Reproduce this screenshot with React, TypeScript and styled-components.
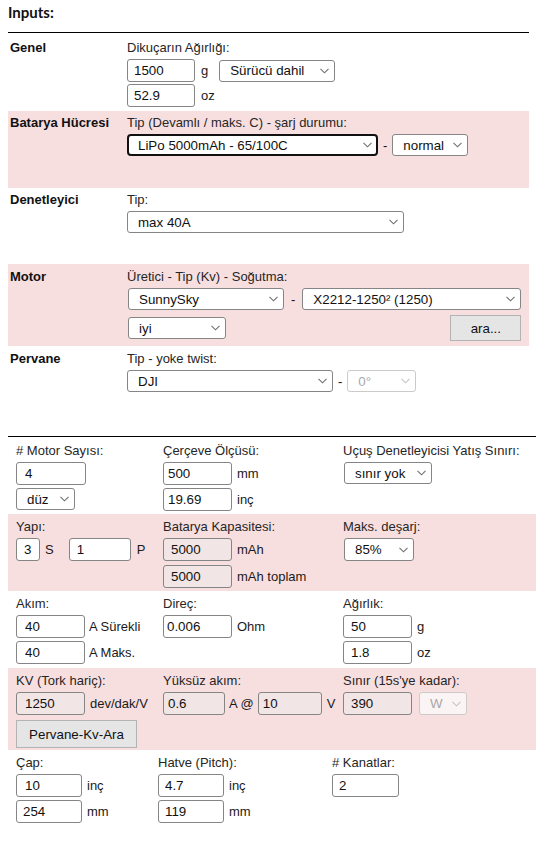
import React from "react";
import styled, { createGlobalStyle } from "styled-components";

const GlobalStyle = createGlobalStyle`
  html, body { margin: 0; padding: 0; background: #fff; }
  body {
    font-family: "Liberation Sans", Arial, sans-serif;
    font-size: 13px;
    color: #1a1a1a;
  }
  * { box-sizing: border-box; }
`;

const Page = styled.div`
  width: 542px;
  padding-left: 8px;
`;

const Header = styled.div`
  width: 521px;
  height: 33px;
  border-bottom: 1px solid #000;
  padding-top: 2px;
  font-family: Lato, "Open Sans", sans-serif;
  font-weight: 700;
  font-size: 15px;
  line-height: 20px;
  color: #111;
`;

const TopTable = styled.div`
  width: 521px;
`;

const TRow = styled.div<{ $pink?: boolean; $pt: number; $pb?: number; $minH?: number }>`
  display: grid;
  grid-template-columns: 119px 1fr;
  background: ${(p) => (p.$pink ? "#f8dfdf" : "transparent")};
  padding: ${(p) => p.$pt}px 0 ${(p) => p.$pb ?? 0}px;
  min-height: ${(p) => p.$minH ?? 0}px;
`;

const RowLabel = styled.div`
  font-weight: 700;
  padding-left: 2px;
  line-height: 15px;
  color: #111;
`;

const Cell = styled.div`
  display: flex;
  flex-direction: column;
  align-items: flex-start;
`;

const FieldTitle = styled.div`
  line-height: 15px;
  margin-bottom: 4px;
  color: #262626;
  white-space: nowrap;
`;

const FieldLine = styled.div<{ $mt?: number; $between?: boolean }>`
  display: flex;
  align-items: center;
  margin-top: ${(p) => p.$mt ?? 0}px;
  justify-content: ${(p) => (p.$between ? "space-between" : "flex-start")};
  align-self: ${(p) => (p.$between ? "stretch" : "auto")};
`;

const InlineBlock = styled.div<{ $ml?: number }>`
  display: inline-flex;
  flex-direction: column;
  margin-left: ${(p) => p.$ml ?? 0}px;
`;

const TextInput = styled.input<{ $w: number; $ro?: boolean; $pl?: number }>`
  flex: none;
  width: ${(p) => p.$w}px;
  height: 23px;
  border: 1px solid #858585;
  border-radius: 3px;
  padding: 0 3px 0 ${(p) => p.$pl ?? 6}px;
  font-family: "Liberation Sans", Arial, sans-serif;
  font-size: 13.33px;
  color: #111;
  background: ${(p) => (p.$ro ? "#f1e5e5" : "#fff")};
  outline: none;
`;

const Unit = styled.span<{ $ml?: number; $mr?: number }>`
  margin-left: ${(p) => p.$ml ?? 5}px;
  margin-right: ${(p) => p.$mr ?? 0}px;
  line-height: 15px;
  color: #1a1a1a;
  white-space: nowrap;
`;

const Dash = styled.span<{ $m?: number }>`
  margin: 0 ${(p) => p.$m ?? 5}px;
  color: #111;
`;

const SelectWrap = styled.span<{ $w: number; $h?: number; $ml?: number }>`
  position: relative;
  display: inline-flex;
  flex: none;
  width: ${(p) => p.$w}px;
  height: ${(p) => p.$h ?? 22}px;
  margin-left: ${(p) => p.$ml ?? 0}px;
`;

const NativeSelect = styled.select<{ $focus?: boolean; $dis?: boolean; $tint?: boolean }>`
  appearance: none;
  -webkit-appearance: none;
  width: 100%;
  height: 100%;
  border: ${(p) =>
    p.$focus ? "2px solid #111" : `1px solid ${p.$dis ? "#cfcaca" : "#858585"}`};
  border-radius: ${(p) => (p.$focus ? 4 : 3)}px;
  padding: 0 20px 0 ${(p) => (p.$focus ? 9 : 10)}px;
  background: ${(p) => (p.$tint ? "#fbf4f4" : "#fff")};
  color: ${(p) => (p.$dis ? "#a8a8a8" : "#111")};
  font-family: "Liberation Sans", Arial, sans-serif;
  font-size: 13.33px;
  outline: none;
  opacity: 1;
`;

const Chevron = styled.svg<{ $dis?: boolean }>`
  position: absolute;
  right: 6px;
  top: 50%;
  margin-top: -3px;
  width: 9px;
  height: 6px;
  pointer-events: none;
  fill: none;
  stroke: ${(p) => (p.$dis ? "#c4c4c4" : "#6f6f6f")};
  stroke-width: 1.1;
`;

const GreyButton = styled.button<{ $w: number; $h: number }>`
  flex: none;
  width: ${(p) => p.$w}px;
  height: ${(p) => p.$h}px;
  background: #e5e5e5;
  border: 1px solid #b3b3b3;
  border-radius: 0;
  font-family: "Liberation Sans", Arial, sans-serif;
  font-size: 13.33px;
  color: #111;
  padding: 0;
`;

const BottomTable = styled.div`
  width: 528px;
  border-top: 1px solid #000;
`;

const BRow = styled.div<{ $pink?: boolean; $cols: string; $pt: number; $pb: number }>`
  display: grid;
  grid-template-columns: ${(p) => p.$cols};
  padding: ${(p) => p.$pt}px 0 ${(p) => p.$pb}px 8px;
  background: ${(p) => (p.$pink ? "#f8dfdf" : "transparent")};
`;

type SelProps = {
  w: number;
  h?: number;
  ml?: number;
  value: string;
  focus?: boolean;
  disabled?: boolean;
  tint?: boolean;
};

function Select({ w, h, ml, value, focus, disabled, tint }: SelProps) {
  return (
    <SelectWrap $w={w} $h={h} $ml={ml}>
      <NativeSelect $focus={focus} $dis={disabled} $tint={tint} disabled={disabled}>
        <option>{value}</option>
      </NativeSelect>
      <Chevron $dis={disabled} viewBox="0 0 9 6">
        <path d="M0.5 0.8 L4.5 4.8 L8.5 0.8" />
      </Chevron>
    </SelectWrap>
  );
}

const COLS = "147px 180px 1fr";
const COLS_LAST = "142px 174px 1fr";

export default function App() {
  return (
    <Page>
      <GlobalStyle />
      <Header>Inputs:</Header>

      <TopTable>
        <TRow $pt={7} $pb={4}>
          <RowLabel>Genel</RowLabel>
          <Cell>
            <FieldTitle>Dikuçarın Ağırlığı:</FieldTitle>
            <FieldLine>
              <TextInput $w={68} defaultValue="1500" />
              <Unit $ml={6} $mr={11}>g</Unit>
              <Select w={116} value="Sürücü dahil" />
            </FieldLine>
            <FieldLine $mt={2}>
              <TextInput $w={68} defaultValue="52.9" />
              <Unit $ml={6}>oz</Unit>
            </FieldLine>
          </Cell>
        </TRow>

        <TRow $pink $pt={4} $minH={77}>
          <RowLabel>Batarya Hücresi</RowLabel>
          <Cell>
            <FieldTitle>Tip (Devamlı / maks. C) - şarj durumu:</FieldTitle>
            <FieldLine>
              <Select w={251} value="LiPo 5000mAh - 65/100C" focus />
              <Dash>-</Dash>
              <Select w={76} value="normal" />
            </FieldLine>
          </Cell>
        </TRow>

        <TRow $pt={4} $minH={76}>
          <RowLabel>Denetleyici</RowLabel>
          <Cell>
            <FieldTitle>Tip:</FieldTitle>
            <FieldLine>
              <Select w={277} value="max 40A" />
            </FieldLine>
          </Cell>
        </TRow>

        <TRow $pink $pt={5} $pb={5}>
          <RowLabel>Motor</RowLabel>
          <Cell>
            <FieldTitle>Üretici - Tip (Kv) - Soğutma:</FieldTitle>
            <InlineBlock $ml={1}>
              <FieldLine>
                <Select w={156} value="SunnySky" />
                <Dash $m={7}>-</Dash>
                <Select w={219} value="X2212-1250² (1250)" />
              </FieldLine>
              <FieldLine $mt={5} $between>
                <Select w={98} value="iyi" />
                <GreyButton $w={71} $h={26}>ara...</GreyButton>
              </FieldLine>
            </InlineBlock>
          </Cell>
        </TRow>

        <TRow $pt={5} $minH={90}>
          <RowLabel>Pervane</RowLabel>
          <Cell>
            <FieldTitle>Tip - yoke twist:</FieldTitle>
            <FieldLine>
              <Select w={206} value="DJI" />
              <Dash>-</Dash>
              <Select w={69} value="0°" disabled />
            </FieldLine>
          </Cell>
        </TRow>
      </TopTable>

      <BottomTable>
        <BRow $cols={COLS} $pt={6} $pb={3}>
          <Cell>
            <FieldTitle># Motor Sayısı:</FieldTitle>
            <FieldLine>
              <TextInput $w={70} $pl={8} defaultValue="4" />
            </FieldLine>
            <FieldLine $mt={3}>
              <Select w={59} value="düz" />
            </FieldLine>
          </Cell>
          <Cell>
            <FieldTitle>Çerçeve Ölçüsü:</FieldTitle>
            <FieldLine>
              <TextInput $w={69} $pl={4} defaultValue="500" />
              <Unit>mm</Unit>
            </FieldLine>
            <FieldLine $mt={3}>
              <TextInput $w={69} $pl={4} defaultValue="19.69" />
              <Unit>inç</Unit>
            </FieldLine>
          </Cell>
          <Cell>
            <FieldTitle>Uçuş Denetleyicisi Yatış Sınırı:</FieldTitle>
            <FieldLine>
              <Select w={88} ml={1} value="sınır yok" />
            </FieldLine>
          </Cell>
        </BRow>

        <BRow $pink $cols={COLS} $pt={5} $pb={3}>
          <Cell>
            <FieldTitle>Yapı:</FieldTitle>
            <FieldLine>
              <TextInput $w={24} $pl={7} defaultValue="3" />
              <Unit $ml={5} $mr={15}>S</Unit>
              <TextInput $w={62} $pl={7} defaultValue="1" />
              <Unit $ml={6}>P</Unit>
            </FieldLine>
          </Cell>
          <Cell>
            <FieldTitle>Batarya Kapasitesi:</FieldTitle>
            <FieldLine>
              <TextInput $w={69} $pl={7} $ro readOnly defaultValue="5000" />
              <Unit>mAh</Unit>
            </FieldLine>
            <FieldLine $mt={4}>
              <TextInput $w={69} $pl={7} $ro readOnly defaultValue="5000" />
              <Unit>mAh toplam</Unit>
            </FieldLine>
          </Cell>
          <Cell>
            <FieldTitle>Maks. deşarj:</FieldTitle>
            <FieldLine>
              <Select w={70} h={23} ml={1} value="85%" />
            </FieldLine>
          </Cell>
        </BRow>

        <BRow $cols={COLS} $pt={5} $pb={4}>
          <Cell>
            <FieldTitle>Akım:</FieldTitle>
            <FieldLine>
              <TextInput $w={69} $pl={8} defaultValue="40" />
              <Unit $ml={4}>A Sürekli</Unit>
            </FieldLine>
            <FieldLine $mt={3}>
              <TextInput $w={69} $pl={8} defaultValue="40" />
              <Unit $ml={4}>A Maks.</Unit>
            </FieldLine>
          </Cell>
          <Cell>
            <FieldTitle>Direç:</FieldTitle>
            <FieldLine>
              <TextInput $w={69} $pl={3} defaultValue="0.006" />
              <Unit>Ohm</Unit>
            </FieldLine>
          </Cell>
          <Cell>
            <FieldTitle>Ağırlık:</FieldTitle>
            <FieldLine>
              <TextInput $w={69} $pl={7} defaultValue="50" />
              <Unit>g</Unit>
            </FieldLine>
            <FieldLine $mt={3}>
              <TextInput $w={69} $pl={7} defaultValue="1.8" />
              <Unit>oz</Unit>
            </FieldLine>
          </Cell>
        </BRow>

        <BRow $pink $cols={COLS} $pt={5} $pb={2}>
          <Cell>
            <FieldTitle>KV (Tork hariç):</FieldTitle>
            <FieldLine>
              <TextInput $w={69} $pl={8} $ro readOnly defaultValue="1250" />
              <Unit>dev/dak/V</Unit>
            </FieldLine>
            <FieldLine $mt={5}>
              <GreyButton $w={121} $h={28}>Pervane-Kv-Ara</GreyButton>
            </FieldLine>
          </Cell>
          <Cell>
            <FieldTitle>Yüksüz akım:</FieldTitle>
            <FieldLine>
              <TextInput $w={62} $pl={4} $ro readOnly defaultValue="0.6" />
              <Unit $ml={4} $mr={4}>A @</Unit>
              <TextInput $w={64} $pl={4} $ro readOnly defaultValue="10" />
              <Unit $ml={5}>V</Unit>
            </FieldLine>
          </Cell>
          <Cell>
            <FieldTitle>Sınır (15s'ye kadar):</FieldTitle>
            <FieldLine>
              <TextInput $w={69} $pl={7} $ro readOnly defaultValue="390" />
              <Select w={48} h={23} ml={7} value="W" disabled tint />
            </FieldLine>
          </Cell>
        </BRow>

        <BRow $cols={COLS_LAST} $pt={5} $pb={6}>
          <Cell>
            <FieldTitle>Çap:</FieldTitle>
            <FieldLine>
              <TextInput $w={66} $pl={8} defaultValue="10" />
              <Unit>inç</Unit>
            </FieldLine>
            <FieldLine $mt={3}>
              <TextInput $w={66} $pl={6} defaultValue="254" />
              <Unit>mm</Unit>
            </FieldLine>
          </Cell>
          <Cell>
            <FieldTitle>Hatve (Pitch):</FieldTitle>
            <FieldLine>
              <TextInput $w={66} $pl={6} defaultValue="4.7" />
              <Unit>inç</Unit>
            </FieldLine>
            <FieldLine $mt={3}>
              <TextInput $w={66} $pl={6} defaultValue="119" />
              <Unit>mm</Unit>
            </FieldLine>
          </Cell>
          <Cell>
            <FieldTitle># Kanatlar:</FieldTitle>
            <FieldLine>
              <TextInput $w={67} $pl={6} defaultValue="2" />
            </FieldLine>
          </Cell>
        </BRow>
      </BottomTable>
    </Page>
  );
}
